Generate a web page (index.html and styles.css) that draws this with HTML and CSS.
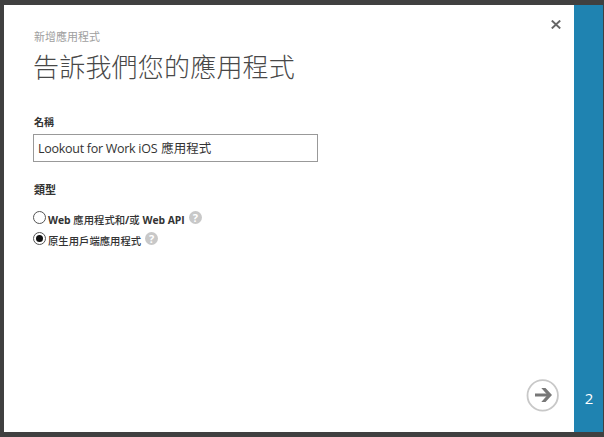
FILE: index.html
```html
<!DOCTYPE html>
<html lang="zh-Hant">
<head>
<meta charset="utf-8">
<title>新增應用程式</title>
<link rel="stylesheet" href="styles.css">
</head>
<body>
<div class="dialog">
  <main class="panel">
    <p class="crumb">新增應用程式</p>
    <h1 class="title">告訴我們您的應用程式</h1>
    <label class="label" for="name">名稱</label>
    <div class="field" id="name"><span class="latin">Lookout for Work iOS</span><span>應用程式</span></div>
    <div class="label type">類型</div>
    <div class="option">
      <span class="radio"></span>
      <span class="text"><b>Web</b> 應用程式和<b>/</b>或 <b>Web API</b></span>
      <span class="help">?</span>
    </div>
    <div class="option">
      <span class="radio checked"></span>
      <span class="text">原生用戶端應用程式</span>
      <span class="help">?</span>
    </div>
    <svg class="close" viewBox="0 0 10 9"><path d="M.8 .6 9.2 8.4M9.2 .6 .8 8.4"/></svg>
    <svg class="next" viewBox="0 0 34 34"><circle cx="16.7" cy="17.4" r="15.2"/><path class="shaft" d="M9 17H23"/><path class="head" d="M15.3 10H19.5L26 17 19.5 24H15.3L21.5 17Z"/></svg>
  </main>
  <aside class="step">2</aside>
</div>
</body>
</html>
```
FILE: styles.css
```css
* { box-sizing: border-box; }
body {
  margin: 0;
  height: 437px;
  padding: 5px 1px 5px 4px;
  background: #404040;
  color: #333;
  font-family: "Open Sans", "Noto Sans CJK TC", sans-serif;
  overflow: hidden;
}
.dialog { display: flex; height: 427px; }
.panel {
  position: relative;
  flex: 1;
  padding: 24px 0 0 29px;
  background: #fff;
}
.crumb {
  margin: 0;
  height: 16px;
  padding-left: 1px;
  font-size: 11px;
  line-height: 16px;
  color: #a0a0a0;
}
.title {
  margin: 0;
  height: 42px;
  font-family: "Noto Sans CJK TC Light", "Noto Sans CJK TC", sans-serif;
  font-size: 26px;
  font-weight: 300;
  line-height: 42px;
  letter-spacing: .2px;
  color: #484848;
}
.label {
  display: block;
  margin-top: 27px;
  height: 16px;
  padding-left: 1px;
  font-size: 10px;
  font-weight: 700;
  line-height: 16px;
}
.field {
  display: flex;
  gap: 4px;
  margin-top: 4px;
  width: 285px;
  height: 28px;
  padding-left: 4px;
  border: 1px solid #999;
  font-size: 12.5px;
  line-height: 28px;
  white-space: nowrap;
}
.latin { letter-spacing: -.28px; }
.type { margin: 20px 0 13px; font-size: 11px; }
.option { display: flex; align-items: flex-start; height: 21px; }
.radio {
  display: grid;
  place-items: center;
  width: 13px;
  height: 13px;
  border: 1px solid #555;
  border-radius: 50%;
}
.checked::before {
  content: "";
  width: 7px;
  height: 7px;
  border-radius: 50%;
  background: #111;
}
.text {
  margin: 1px 4px 0 2px;
  font-size: 10.35px;
  font-weight: 500;
  line-height: 16px;
  white-space: nowrap;
}
.help {
  width: 13px;
  height: 13px;
  border-radius: 50%;
  background: #c8c8c8;
  color: #fff;
  font-size: 11px;
  font-weight: 700;
  line-height: 13px;
  text-align: center;
}
.close {
  position: absolute;
  top: 15px;
  right: 13px;
  width: 10px;
  height: 9px;
  fill: none;
  stroke: #666;
  stroke-width: 2;
}
.next {
  position: absolute;
  right: 14px;
  bottom: 20px;
  width: 34px;
  height: 34px;
}
.next circle { fill: none; stroke: #c8c8c8; stroke-width: 1.8; }
.shaft { stroke: #777; stroke-width: 3; }
.head { fill: #777; }
.step {
  width: 29px;
  padding: 382px 0 0 1px;
  background: #1f83b1;
  color: #fff;
  font-size: 15px;
  line-height: 22px;
  text-align: center;
}
```
